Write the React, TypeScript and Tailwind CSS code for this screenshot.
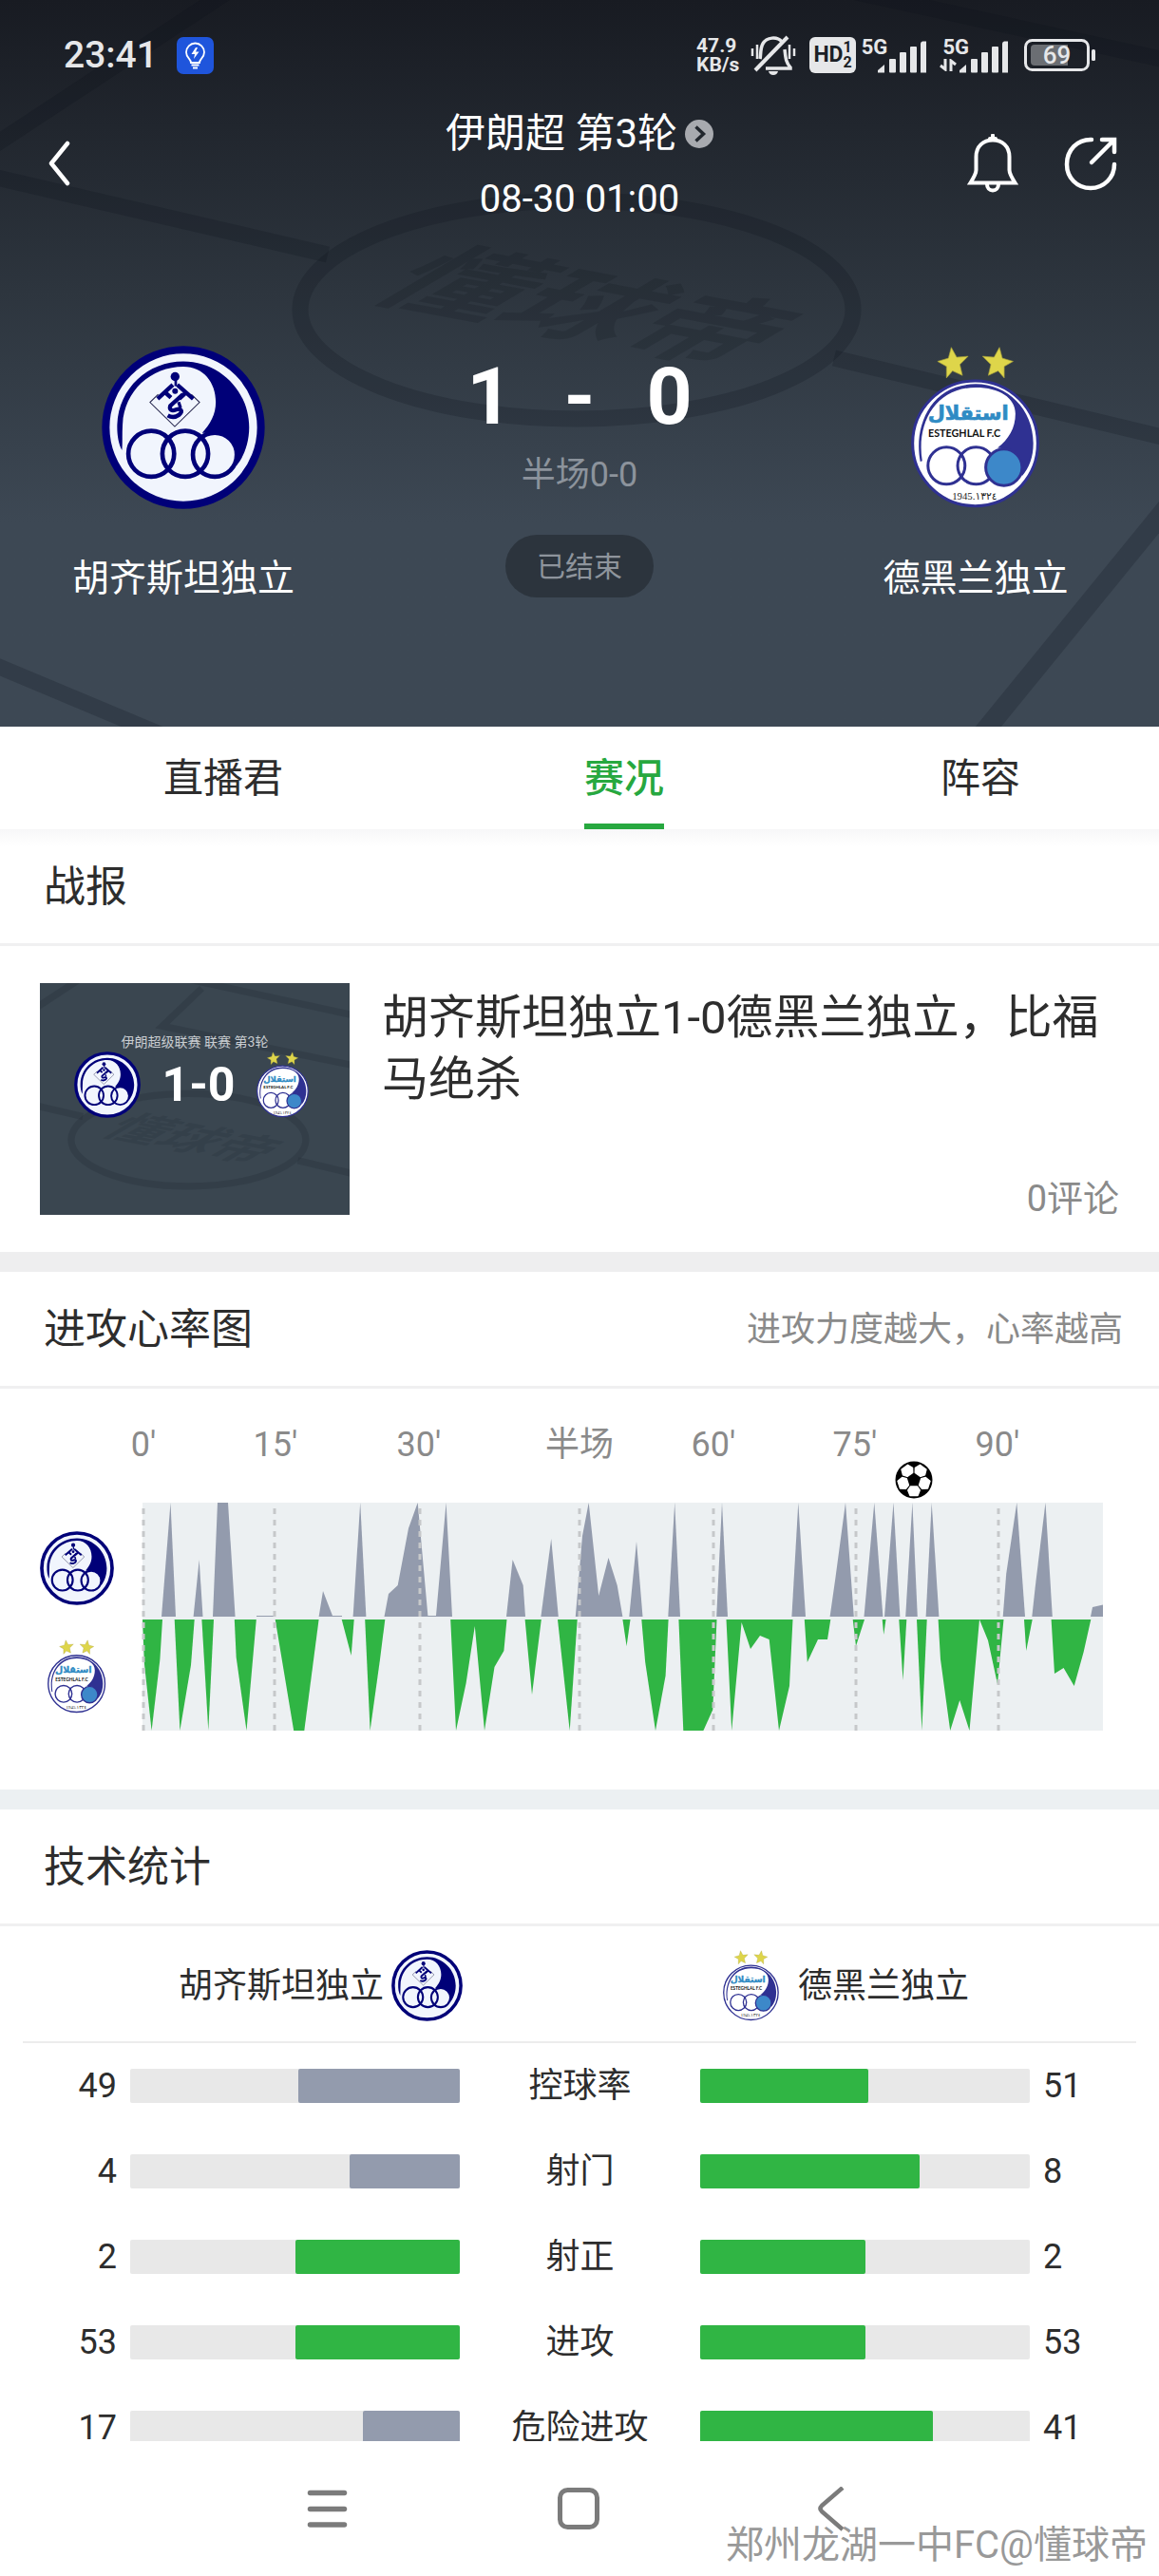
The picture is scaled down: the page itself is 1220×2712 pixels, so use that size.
import React from 'react';

type Team = 'home' | 'away';

const HOME_NAME = '胡齐斯坦独立';
const AWAY_NAME = '德黑兰独立';

const tabs = [
  { label: '直播君', active: false },
  { label: '赛况', active: true },
  { label: '阵容', active: false },
];

const stats = [
  { label: '控球率', home: 49, away: 51 },
  { label: '射门', home: 4, away: 8 },
  { label: '射正', home: 2, away: 2 },
  { label: '进攻', home: 53, away: 53 },
  { label: '危险进攻', home: 17, away: 41 },
];

const ticks = [
  { x: 1, labelX: 1, label: "0'" },
  { x: 139, labelX: 140, label: "15'" },
  { x: 292, labelX: 291, label: "30'" },
  { x: 460, labelX: 460, label: '半场' },
  { x: 601, labelX: 601, label: "60'" },
  { x: 751, labelX: 750, label: "75'" },
  { x: 901, labelX: 900, label: "90'" },
];

// home attack, drawn above the centre line
const homeWaves = [
  '20,120 29.5,0 35,120',
  '53.6,120 59.7,60 63.5,120',
  '74,120 79,0 90,0 97.6,120',
  '120,119 138,119 138,120 120,120',
  '185.6,120 190,93 200,119 210,119 210,120',
  '221.6,120 229.2,0 235.4,120',
  '254.5,120 259,96 268.7,87 280,27 289.7,0 300.4,119 309,119 319.6,0 326,120',
  '383,120 389.6,60 400.7,87 403,120',
  '419.4,120 430.2,38 437.8,120',
  '455.8,120 463,35 469.7,0 480.2,98 490.5,58 499.7,87 505.4,120',
  '512.3,120 520,41 526.5,120',
  '553.3,120 560.2,0 566,120',
  '604.2,120 610,0 616,120',
  '683.4,120 690.3,0 698,120',
  '723.6,120 729.3,80 740,0 748.8,120',
  '759.5,120 770.3,0 779.4,120',
  '781,120 790.5,0 797.4,120',
  '803.2,120 810.4,0 815.8,120',
  '824.6,120 830.7,0 838.4,120',
  '905.7,120 909.2,75 920.3,0 929,120',
  '936.3,120 939.8,88 950.5,0 957.8,120',
  '998,120 1000,110 1011,107.5 1011,120',
];

// away attack, drawn below it
const awayWaves = [
  '0,123 2,170 9.6,240 18.4,165 21,123',
  '33.7,123 39.4,240 51,171 54.7,123',
  '62.4,123 69.3,240 75,123',
  '96.8,123 98.7,163 109.5,240 119.8,123',
  '139.7,123 159.2,240 170.3,240 185.6,123',
  '209.7,123 219.7,161 222.7,123',
  '234.2,123 239.6,240 250,165 255.3,123',
  '324.2,123 330,240 340.6,190 349.8,130 360,240 370.5,173 380.4,156 383.5,123',
  '402.6,123 410,202 419.8,123',
  '437,123 449.7,240 457.7,123',
  '505.4,123 509.6,151 513.5,123',
  '525.3,123 529.2,168 540,240 550.6,182 553.6,123',
  '564.4,123 569.3,240 590.4,240 600.3,218 604.5,123',
  '614.5,123 620.2,240 630.6,126 640,154 650,140 659.7,144 670,240 681,193 684.5,123',
  '696.8,123 699.8,168 711,144 721,144 724.3,123',
  '747.7,123 751,151 760,123',
  '778.7,123 780.2,139 782.5,123',
  '796.3,123 800.5,187 804.3,123',
  '815,123 820.4,240 825.7,123',
  '837.6,123 840,165 850.2,240 860.2,208 870.5,240 881,123',
  '881,123 890,145 900,191 906.5,123',
  '928,123 930.2,156 936.7,123',
  '956.6,123 960,180 969.6,174 980.7,193 990.7,157 998.3,123',
];

function HomeLogo({ className }: { className: string }) {
  return (
    <svg viewBox="84 73 514 514" className={className} role="img" aria-label={HOME_NAME}>
      <circle cx="341" cy="330" r="244" fill="#f1f5fd" stroke="#000078" strokeWidth="24" />
      <path
        fill="#000078"
        d="M148 402C136 380 132 350 133 320C138 205 230 122 341 122C455 122 548 215 548 330C548 380 530 425 508 450C510 400 480 352 438 347L400 347C425 320 443 290 443 250C443 190 405 139 341 139C240 139 155 215 150 320C148 350 150 375 148 402Z"
      />
      <circle cx="440" cy="416" r="66" fill="#f1f5fd" />
      <g fill="none" stroke="#000078" strokeWidth="14">
        <circle cx="240" cy="413" r="72" />
        <circle cx="347" cy="413" r="72" />
        <circle cx="440" cy="416" r="69" />
      </g>
      <path d="M262 226L236 251L314 327L392 251L366 226" fill="none" stroke="#22224a" strokeWidth="3" />
      <circle cx="315" cy="170" r="14" fill="#000078" />
      <circle cx="315" cy="216" r="9" fill="#000078" />
      <g fill="none" stroke="#000078" strokeWidth="13">
        <path d="M317 180V200" strokeWidth="8" />
        <path d="M308 196L260 240M282 218L302 236" />
        <path d="M322 196L372 240M350 220L328 240" />
        <path d="M340 226L300 262C296 274 304 280 318 274C334 268 340 280 328 290C314 300 302 298 292 292" />
      </g>
      <path d="M326 250L332 268" stroke="#000078" strokeWidth="10" />
    </svg>
  );
}

function AwayLogo({ className }: { className: string }) {
  const star = 'M-5-48L12-17L48-20L22 6L30 40L-1 26L-20 48L-20 12L-48-4L-14-14Z';
  return (
    <svg viewBox="119 77 402 512" className={className} role="img" aria-label={AWAY_NAME}>
      <g fill="#ded54a" stroke="#a39c3c" strokeWidth="2">
        <path transform="translate(250 130)" d={star} />
        <path transform="translate(391 130) scale(-1 1)" d={star} />
      </g>
      <circle cx="320" cy="383" r="196" fill="#fff" stroke="#2f3192" strokeWidth="9" />
      <path
        fill="#2f3192"
        d="M148 440C126 330 180 197 322 197C420 197 502 275 502 383C502 425 490 460 466 486L464 440C450 415 430 400 390 397C425 370 446 335 446 290C446 240 395 208 322 208C195 208 135 320 154 438Z"
      />
      <g fill="none" stroke="#2f3192" strokeWidth="9">
        <circle cx="230" cy="453" r="58" />
        <circle cx="323" cy="453" r="58" />
        <circle cx="410" cy="458" r="57" fill="#3d88c9" />
      </g>
      <text x="298" y="310" textAnchor="middle" fontSize="62" fontWeight="700" fill="#2f8bc4" stroke="#2f8bc4" strokeWidth="2" fontFamily="DejaVu Sans, sans-serif">استقلال</text>
      <text x="286" y="363" textAnchor="middle" fontSize="32" fontWeight="700" fill="#111" fontFamily="Lato, sans-serif">ESTEGHLAL F.C</text>
      <text x="318" y="558" textAnchor="middle" fontSize="32" fill="#222" fontFamily="Liberation Serif, DejaVu Sans, serif">1945.١٣٢٤</text>
    </svg>
  );
}

function TeamLogo({ team, className }: { team: Team; className: string }) {
  return team === 'home' ? <HomeLogo className={className} /> : <AwayLogo className={className} />;
}

function PitchArt({ viewBox, withBox }: { viewBox: string; withBox?: boolean }) {
  return (
    <svg
      viewBox={viewBox}
      preserveAspectRatio="xMidYMid slice"
      className={withBox ? 'absolute inset-0 h-full w-full opacity-65' : 'absolute inset-0 h-full w-full'}
      aria-hidden="true"
    >
      <g fill="none" stroke="#0a1018" strokeOpacity="0.2" strokeWidth="17">
        <path d="M360-88L-20 162" />
        <path d="M-20 183L345 268" />
        <path d="M500-96L1240 66" />
        <path d="M878 377L1240 464" />
        <path d="M1240 520L1020 790" strokeWidth="21" />
        <path d="M-20 694L190 782" />
        {withBox && <path d="M640-50L542 44L1010 140" />}
        <ellipse cx="607" cy="326" rx="291" ry="115" />
      </g>
      <text
        transform="matrix(1.23 0.23 -1.1 0.65 384 312)"
        fontSize="105"
        fontWeight="700"
        fill="#0a1018"
        fillOpacity="0.17"
      >
        懂球帝
      </text>
    </svg>
  );
}

function SignalBars() {
  return (
    <svg viewBox="0 0 52 34" className="h-[34px] w-[52px]" fill="#e6e7e9" aria-hidden="true">
      <path d="M0 33.500V31L7 25V33.500Z" />
      <rect x="12" y="19" width="7" height="14.500" rx="1" />
      <rect x="23" y="12" width="7" height="21.500" rx="1" />
      <rect x="34" y="6" width="7" height="27.500" rx="1" />
      <path d="M45 3Q45 1 47 0.500H51V33.500H45Z" />
    </svg>
  );
}

function StatusBar() {
  return (
    <div className="flex h-[110px] items-center pt-1.5 pr-[66px] pl-[67px] text-[#e6e7e9]">
      <span className="text-[39px] font-medium">23:41</span>
      <svg viewBox="0 0 39 39" className="ml-5 size-[39px]" aria-hidden="true">
        <rect width="39" height="39" rx="7" fill="#1f55dc" />
        <path d="M15 27C15 23 10 22 10 16A9.500 9.500 0 0 1 29 16C29 22 24 23 24 27Z" fill="none" stroke="#fff" strokeWidth="1.800" />
        <path d="M20 11L15.500 18H19L18 23L23.500 15.500H20L22 11Z" fill="#fff" />
        <path d="M15.500 29.500H23.500M17 32.500H22" stroke="#fff" strokeWidth="1.800" />
      </svg>

      <div className="ml-auto flex items-center">
        <div className="text-[21px] leading-5 font-bold">
          <div>47.9</div>
          <div>KB/s</div>
        </div>
        <svg viewBox="0 0 48 42" className="ml-3 h-[42px] w-12" fill="none" stroke="#e6e7e9" strokeWidth="3.500" aria-hidden="true">
          <path d="M10 25C11 22 10 14 13 9C17 2 28 1 33 7M36 15C37 24 37 28 42 34V35H16" />
          <path d="M5 37L39 2" strokeWidth="4" />
          <path d="M2 14V22M7 10V25M41 10V25M46 14V22" strokeWidth="2.500" />
          <path d="M19 38H29Q28 42 24 42Q20 42 19 38Z" fill="#e6e7e9" stroke="none" />
        </svg>
        <div className="ml-3.5 flex h-[38px] items-center rounded-md bg-[#e6e7e9] px-1 text-[#1b1f26]">
          <span className="text-[23px] font-bold">HD</span>
          <span className="text-[16px] leading-[16px] font-bold">
            <span className="block">1</span>
            <span className="block">2</span>
          </span>
        </div>
        <div className="ml-1.5 flex h-[38px] items-start">
          <span className="text-[22px] leading-[22px] font-bold">5G</span>
          <span className="-ml-2.5 self-end">
            <SignalBars />
          </span>
        </div>
        <div className="relative ml-4 flex h-[38px] items-start">
          <span className="text-[22px] leading-[22px] font-bold">5G</span>
          <svg viewBox="0 0 18 13" className="absolute bottom-0.5 left-[-3px] h-[13px] w-[18px]" fill="none" stroke="#e6e7e9" strokeWidth="3" aria-hidden="true">
            <path d="M1 7L6 11V0M17 6L12 2V13" />
          </svg>
          <span className="-ml-2.5 self-end">
            <SignalBars />
          </span>
        </div>
        <div className="relative ml-4">
          <svg viewBox="0 0 76 34" className="block h-[34px] w-[76px]" aria-hidden="true">
            <rect x="1.500" y="1.500" width="66" height="31" rx="7" fill="none" stroke="#e6e7e9" strokeWidth="3" />
            <path d="M7 10Q7 6 11 6H46V28H11Q7 28 7 24Z" fill="#6b6e73" />
            <rect x="71" y="11" width="4" height="12" rx="1.500" fill="#e6e7e9" />
          </svg>
          <span className="absolute inset-y-0 left-0 flex w-[69px] items-center justify-center text-[26px] font-medium">69</span>
        </div>
      </div>
    </div>
  );
}

function MatchHeader() {
  return (
    <header className="relative bg-linear-to-b from-[#181b22] via-[#2d353e] via-[40%] to-[#3d4854] to-[72%] pb-[131px] text-white">
      <PitchArt viewBox="0 0 1220 765" />
      <div className="relative">
        <StatusBar />
        <div className="grid grid-cols-[1fr_auto_1fr] items-center px-[44px]">
          <button type="button" aria-label="返回" className="mb-1.5 ml-1 justify-self-start">
            <svg viewBox="0 0 28 48" className="h-12 w-7" fill="none" stroke="currentColor" strokeWidth="4.500" strokeLinecap="round" strokeLinejoin="round">
              <path d="M23 3L6 24L23 45" />
            </svg>
          </button>
          <div className="text-center">
            <a href="#league" className="flex items-center gap-2 text-[42px] leading-[62px]">
              <h1>伊朗超 第3轮</h1>
              <svg viewBox="0 0 30 30" className="size-[30px]" aria-hidden="true">
                <circle cx="15" cy="15" r="15" fill="#a8aaaf" />
                <path d="M11.500 7.500L19.500 15L11.500 22.500" fill="none" stroke="#22272e" strokeWidth="3.500" />
              </svg>
            </a>
            <time className="mt-2 block text-[40px] leading-[60px]">08-30 01:00</time>
          </div>
          <div className="mb-1.5 flex gap-[48px] justify-self-end">
            <button type="button" aria-label="提醒">
              <svg viewBox="0 0 54 62" className="h-[62px] w-[54px]" fill="none" stroke="currentColor" strokeWidth="4">
                <path d="M3.500 51.500C7 46 9.500 42 9.500 38V24C9.500 13 17 6.500 27 6.500C37 6.500 44.500 13 44.500 24V38C44.500 42 47 46 50.500 51.500Z" />
                <path d="M27 1.500V6M24 5H30" strokeLinecap="round" />
                <path d="M21 53C21 57 23.500 59.500 27 59.500C30.500 59.500 33 57 33 53" />
              </svg>
            </button>
            <button type="button" aria-label="分享">
              <svg viewBox="0 0 56 62" className="h-[62px] w-14" fill="none" stroke="currentColor" strokeWidth="4.500" strokeLinecap="round">
                <path d="M29 6C14 5.500 3 17 3 32C3 46 13.500 57 28 57C42 57 53 46 53 32" />
                <path d="M29 30L52 7M40 6H53V19" />
              </svg>
            </button>
          </div>
        </div>

        <div className="mt-[124px] grid grid-cols-[386fr_448fr_386fr]">
          <TeamColumn team="home" name={HOME_NAME} />
          <div className="flex flex-col items-center pt-3">
            <div className="grid w-[284px] grid-cols-3 text-center text-[84px] leading-[84px] font-bold">
              <span>1</span>
              <span>-</span>
              <span>0</span>
            </div>
            <p className="mt-4 text-[36px] leading-[48px] text-[#8c939c]">半场0-0</p>
            <span className="mt-[39px] flex h-[66px] w-[156px] items-center justify-center rounded-full bg-[#2c343d] text-[30px] text-[#8e949c]">
              已结束
            </span>
          </div>
          <TeamColumn team="away" name={AWAY_NAME} />
        </div>
      </div>
    </header>
  );
}

function TeamColumn({ team, name }: { team: Team; name: string }) {
  return (
    <a href={`#${team}`} className="flex flex-col items-center">
      <TeamLogo team={team} className="h-[172px]" />
      <span className="mt-12 text-[39px] leading-[50px]">{name}</span>
    </a>
  );
}

function SectionTitle({ title, note }: { title: string; note?: string }) {
  return (
    <div className="flex h-[123px] items-center justify-between border-b-[3px] border-[#f0f0f1] pt-0.5 pr-[38px] pl-[46px]">
      <h2 className="text-[44px]">{title}</h2>
      {note && <span className="text-[36px] text-[#8a8a8a]">{note}</span>}
    </div>
  );
}

function Thumbnail() {
  return (
    <div className="relative h-[244px] w-[326px] shrink-0 overflow-hidden bg-[#3a4650] text-white">
      <PitchArt viewBox="238 -63 769 575" withBox />
      <div className="relative pt-[52px]">
        <p className="text-center text-[14px] leading-[20px] text-[#c9cdd1]">伊朗超级联赛 联赛 第3轮</p>
        <div className="flex items-center justify-between pr-[43px] pl-[36px]">
          <HomeLogo className="size-[70px]" />
          <span className="text-[50px] leading-[70px] font-bold">1-0</span>
          <AwayLogo className="h-[70px]" />
        </div>
      </div>
    </div>
  );
}

function Football() {
  return (
    <svg x="792" y="46" width="40" height="40" viewBox="-20 -20 40 40">
      <circle r="19.500" fill="#000" />
      {[0, 72, 144, 216, 288].map((angle) => (
        <g key={angle} transform={`rotate(${angle})`}>
          <path d="M-3.500 7H3.500L6.200 11L4 16.500H-4L-6.200 11Z" fill="#fff" stroke="#fff" strokeWidth="1.500" strokeLinejoin="round" />
        </g>
      ))}
    </svg>
  );
}

function HeartRateChart() {
  return (
    <div className="flex gap-[30px] pt-[30px] pr-[59px] pb-[62px] pl-[42px]">
      <div className="flex w-[78px] flex-col items-center gap-9 pt-[120px]">
        <HomeLogo className="h-[78px]" />
        <AwayLogo className="h-[78px]" />
      </div>
      <svg viewBox="0 0 1011 330" className="min-w-0 flex-1 overflow-visible" role="img" aria-label="进攻心率图">
        {ticks.map((tick) => (
          <text key={tick.label} x={tick.labelX} y="41" textAnchor="middle" fill="#8a8a8a" className="text-[36px]">
            {tick.label}
          </text>
        ))}
        <Football />
        <g transform="translate(0 90)">
          <rect width="1011" height="240" fill="#ecf0f2" />
          <g fill="#939bad">
            {homeWaves.map((points) => (
              <polygon key={points} points={points} />
            ))}
          </g>
          <g fill="#30b544">
            {awayWaves.map((points) => (
              <polygon key={points} points={points} />
            ))}
          </g>
          {ticks.map((tick) => (
            <line key={tick.label} x1={tick.x} x2={tick.x} y1="6" y2="240" stroke="#c6c8ca" strokeWidth="3" strokeDasharray="6 6" />
          ))}
        </g>
      </svg>
    </div>
  );
}

function StatBar({ value, other, side }: { value: number; other: number; side: Team }) {
  const percent = (value / (value + other)) * 100;
  return (
    <div className={side === 'home' ? 'flex h-9 justify-end rounded-xs bg-[#e8e8e8]' : 'flex h-9 rounded-xs bg-[#e8e8e8]'}>
      <div
        className={value >= other ? 'rounded-xs bg-[#30b544]' : 'rounded-xs bg-[#939bad]'}
        style={{ width: `${percent}%` }}
      />
    </div>
  );
}

function StatsTable() {
  return (
    <table className="w-full table-fixed text-[36px]">
      <colgroup>
        <col className="w-[137px]" />
        <col />
        <col className="w-[253px]" />
        <col />
        <col className="w-[136px]" />
      </colgroup>
      <tbody>
        {stats.map((stat) => (
          <tr key={stat.label} className="h-[90px]">
            <td className="pr-3.5 text-right">{stat.home}</td>
            <td>
              <StatBar value={stat.home} other={stat.away} side="home" />
            </td>
            <th scope="row" className="font-normal">{stat.label}</th>
            <td>
              <StatBar value={stat.away} other={stat.home} side="away" />
            </td>
            <td className="pl-3.5">{stat.away}</td>
          </tr>
        ))}
      </tbody>
    </table>
  );
}

function SystemNav() {
  return (
    <nav className="fixed inset-x-0 bottom-0 h-[142px] bg-white text-[#7b7b7b]">
      <div className="flex items-center justify-between pt-12 pr-[322px] pl-[320px]">
        <button type="button" aria-label="菜单">
          <svg viewBox="0 0 48 48" className="size-12" stroke="currentColor" strokeWidth="5.500" strokeLinecap="round">
            <path d="M6.500 6.500H42.500M6.500 23.500H42.500M6.500 40H42.500" />
          </svg>
        </button>
        <button type="button" aria-label="主页">
          <svg viewBox="0 0 48 48" className="size-12" fill="none" stroke="currentColor" strokeWidth="5">
            <rect x="4.500" y="3.500" width="39" height="39" rx="8" />
          </svg>
        </button>
        <button type="button" aria-label="返回">
          <svg viewBox="0 0 48 48" className="size-12" fill="none" stroke="currentColor" strokeWidth="4.500" strokeLinejoin="round">
            <path d="M37 1L15 20Q12 23 15 26L37 45" />
          </svg>
        </button>
      </div>
      <span className="absolute right-3 bottom-1 text-[40px] leading-[56px] text-[#999]">郑州龙湖一中FC@懂球帝</span>
    </nav>
  );
}

export default function App() {
  return (
    <div lang="zh-CN" className="min-h-screen bg-white [font-family:Roboto,'Noto_Sans_CJK_SC',sans-serif] text-[#2d2d2d]">
      <MatchHeader />

      <nav className="grid h-[108px] grid-cols-[470fr_374fr_376fr] text-[42px]">
        {tabs.map((tab) => (
          <a
            key={tab.label}
            href={`#${tab.label}`}
            className={
              tab.active
                ? 'flex items-center justify-self-center border-b-[6px] border-[#27a83f] pt-1.5 font-medium text-[#27a83f]'
                : 'flex items-center justify-self-center'
            }
          >
            {tab.label}
          </a>
        ))}
      </nav>

      <main>
        <section className="bg-linear-to-b from-[#f7f7f8] to-white to-[18px]">
          <SectionTitle title="战报" />
          <a href="#report" className="flex gap-[34px] bg-white px-[42px] py-[39px]">
            <Thumbnail />
            <div className="flex flex-1 flex-col justify-between pt-1">
              <h3 className="text-[49px] leading-[65px]">胡齐斯坦独立1-0德黑兰独立，比福马绝杀</h3>
              <span className="text-right text-[38px] leading-[34px] text-[#8a8a8a]">0评论</span>
            </div>
          </a>
        </section>

        <section className="border-t-[21px] border-[#eeeeef]">
          <SectionTitle title="进攻心率图" note="进攻力度越大，心率越高" />
          <HeartRateChart />
        </section>

        <section className="border-t-[21px] border-[#ecf0f2]">
          <SectionTitle title="技术统计" />
          <div className="mx-6 grid h-[123px] grid-cols-2 border-b-2 border-[#ececec] pt-1 text-[36px]">
            <div className="flex items-center justify-end gap-2 pr-[123px]">
              <span>{HOME_NAME}</span>
              <HomeLogo className="h-[75px]" />
            </div>
            <div className="flex items-center gap-5 pl-[151px]">
              <AwayLogo className="h-[75px]" />
              <span>{AWAY_NAME}</span>
            </div>
          </div>
          <StatsTable />
        </section>
      </main>

      <SystemNav />
    </div>
  );
}
